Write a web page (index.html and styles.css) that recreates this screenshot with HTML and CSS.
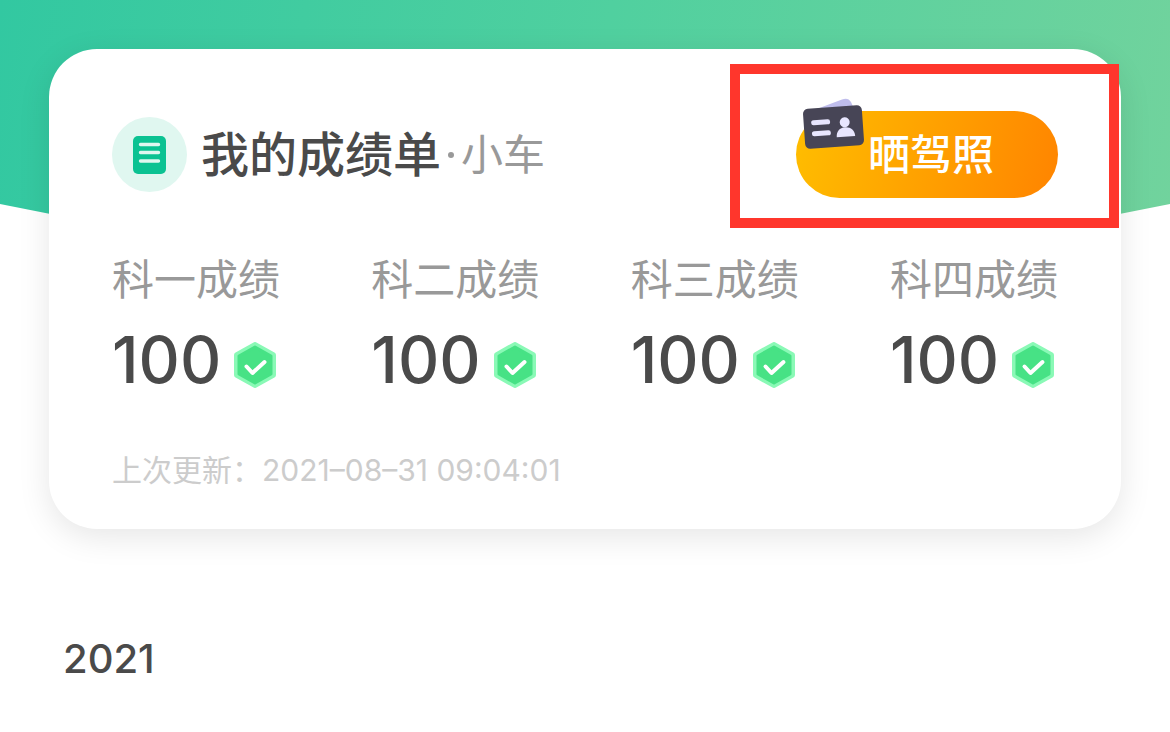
FILE: index.html
```html
<!DOCTYPE html>
<html lang="zh-CN">
<head>
    <meta charset="UTF-8">
    <meta name="viewport" content="width=device-width, initial-scale=1.0">
    <title>我的成绩单</title>
    <link rel="stylesheet" href="styles.css">
</head>
<body>
    <div class="banner"></div>
    <main class="page">
        <section class="card">
            <div class="card-header">
                <svg class="sheet-icon" viewBox="0 0 75 75" aria-hidden="true">
                    <circle cx="37.500" cy="37.500" r="37.500" fill="#e0f7f0"/>
                    <rect x="21" y="19" width="33" height="38" rx="5" fill="#0bc292"/>
                    <path d="M28.500 27.500h18M28.500 35.500h18M28.500 44h18" stroke="#e0f7f0" stroke-width="3.400" stroke-linecap="round"/>
                </svg>
                <h1 class="title">我的成绩单</h1>
                <span class="car-type"><span class="dot"></span>小车</span>
                <div class="share">
                    <button class="share-button" type="button">晒驾照</button>
                    <svg class="license-icon" viewBox="0 0 64 56" aria-hidden="true">
                        <path d="M12 14L40 3.500q6-2.500 9 2.500l4 9-8 8z" fill="#bfbdec"/>
                        <g transform="rotate(-4 31 31)">
                            <rect x="2" y="11" width="59" height="40" rx="5" fill="#474556"/>
                            <path d="M12 25.500h14M12 36.500h14" stroke="#e8e6ff" stroke-width="5" stroke-linecap="round"/>
                            <circle cx="43" cy="27" r="5" fill="#e8e6ff"/>
                            <path d="M34 41.500c0-6 3.500-9.500 9-9.500s9.500 3.500 9.500 9.500z" fill="#e8e6ff"/>
                        </g>
                    </svg>
                    <div class="highlight"></div>
                </div>
            </div>
            <dl class="scores">
                <div class="score">
                    <dt>科一成绩</dt>
                    <dd>100<svg class="pass" viewBox="0 0 42 46"><use href="#pass"/></svg></dd>
                </div>
                <div class="score">
                    <dt>科二成绩</dt>
                    <dd>100<svg class="pass" viewBox="0 0 42 46"><use href="#pass"/></svg></dd>
                </div>
                <div class="score">
                    <dt>科三成绩</dt>
                    <dd>100<svg class="pass" viewBox="0 0 42 46"><use href="#pass"/></svg></dd>
                </div>
                <div class="score">
                    <dt>科四成绩</dt>
                    <dd>100<svg class="pass" viewBox="0 0 42 46"><use href="#pass"/></svg></dd>
                </div>
            </dl>
            <p class="updated">上次更新：<time>2021–08–31 09:04:01</time></p>
        </section>
        <h2 class="year">2021</h2>
    </main>

    <svg class="symbols" aria-hidden="true">
        <symbol id="pass" viewBox="0 0 42 46">
            <path d="M21 3L39 13V33L21 43L3 33V13Z" fill="#8af9b6" stroke="#8af9b6" stroke-width="6" stroke-linejoin="round"/>
            <path d="M21 5L37 14V32L21 41L5 32V14Z" fill="#47e285" stroke="#47e285" stroke-width="3" stroke-linejoin="round"/>
            <path d="M12.500 24.500L18.500 31L30.500 20" fill="none" stroke="#fff" stroke-width="4" stroke-linecap="round" stroke-linejoin="round"/>
        </symbol>
    </svg>
</body>
</html>
```
FILE: styles.css
```css
* {
    box-sizing: border-box;
}
body {
    margin: 0;
    background-color: #fff;
    color: #4a4a4a;
    font-family: Inter, "Noto Sans CJK SC", sans-serif;
}
.banner {
    height: 320px;
    background: linear-gradient(100deg, #32c8a1, #50d09f 50%, #72d39d);
    clip-path: polygon(0 0, 100% 0, 100% 204px, 50% 100%, 0 204px);
}
.page {
    position: relative;
    margin-top: -271px;
    padding: 0 49px;
}
.card {
    padding: 62px 63px 36px;
    border-radius: 48px;
    background-color: #fff;
    box-shadow: 0 8px 32px rgba(0, 0, 0, 0.1);
}
.card-header {
    display: flex;
    align-items: center;
}
.sheet-icon {
    width: 75px;
    height: 75px;
    margin-right: 14px;
}
.title {
    margin: 0;
    font-size: 48px;
    font-weight: 500;
    line-height: 72px;
}
.car-type {
    display: flex;
    align-items: center;
    color: #999;
    font-size: 42px;
    font-weight: 400;
    line-height: 72px;
}
.dot {
    width: 6px;
    height: 6px;
    margin: 0 7px;
    border-radius: 50%;
    background-color: #999;
}
.share {
    position: relative;
    margin-left: auto;
}
.share-button {
    display: block;
    height: 87px;
    padding: 0 64px 0 72px;
    border: 0;
    border-radius: 44px;
    background: linear-gradient(105deg, #ffbe00, #ff8400);
    color: #fff;
    font-family: inherit;
    font-size: 42px;
    font-weight: 500;
    line-height: 87px;
    cursor: pointer;
}
.license-icon {
    position: absolute;
    top: -15px;
    left: 6px;
    width: 64px;
    height: 56px;
    pointer-events: none;
}
.highlight {
    position: absolute;
    top: -47px;
    right: -61px;
    bottom: -30px;
    left: -66px;
    border: 10px solid #ff362c;
    pointer-events: none;
}
.scores {
    display: flex;
    justify-content: space-between;
    margin: 50px 0 0;
}
.score dt {
    color: #999;
    font-size: 42px;
    font-weight: 400;
    line-height: 64px;
}
.score dd {
    display: flex;
    align-items: center;
    gap: 13px;
    margin: 0;
    font-size: 64px;
    font-weight: 500;
    line-height: 96px;
}
.pass {
    width: 42px;
    height: 46px;
    margin-top: 10px;
}
.updated {
    margin: 40px 0 0;
    color: #ccc;
    font-size: 30px;
    font-weight: 400;
    line-height: 45px;
}
.year {
    margin: 98px 14px 0;
    font-size: 40px;
    font-weight: 500;
    line-height: 64px;
}
.symbols {
    display: none;
}
```
